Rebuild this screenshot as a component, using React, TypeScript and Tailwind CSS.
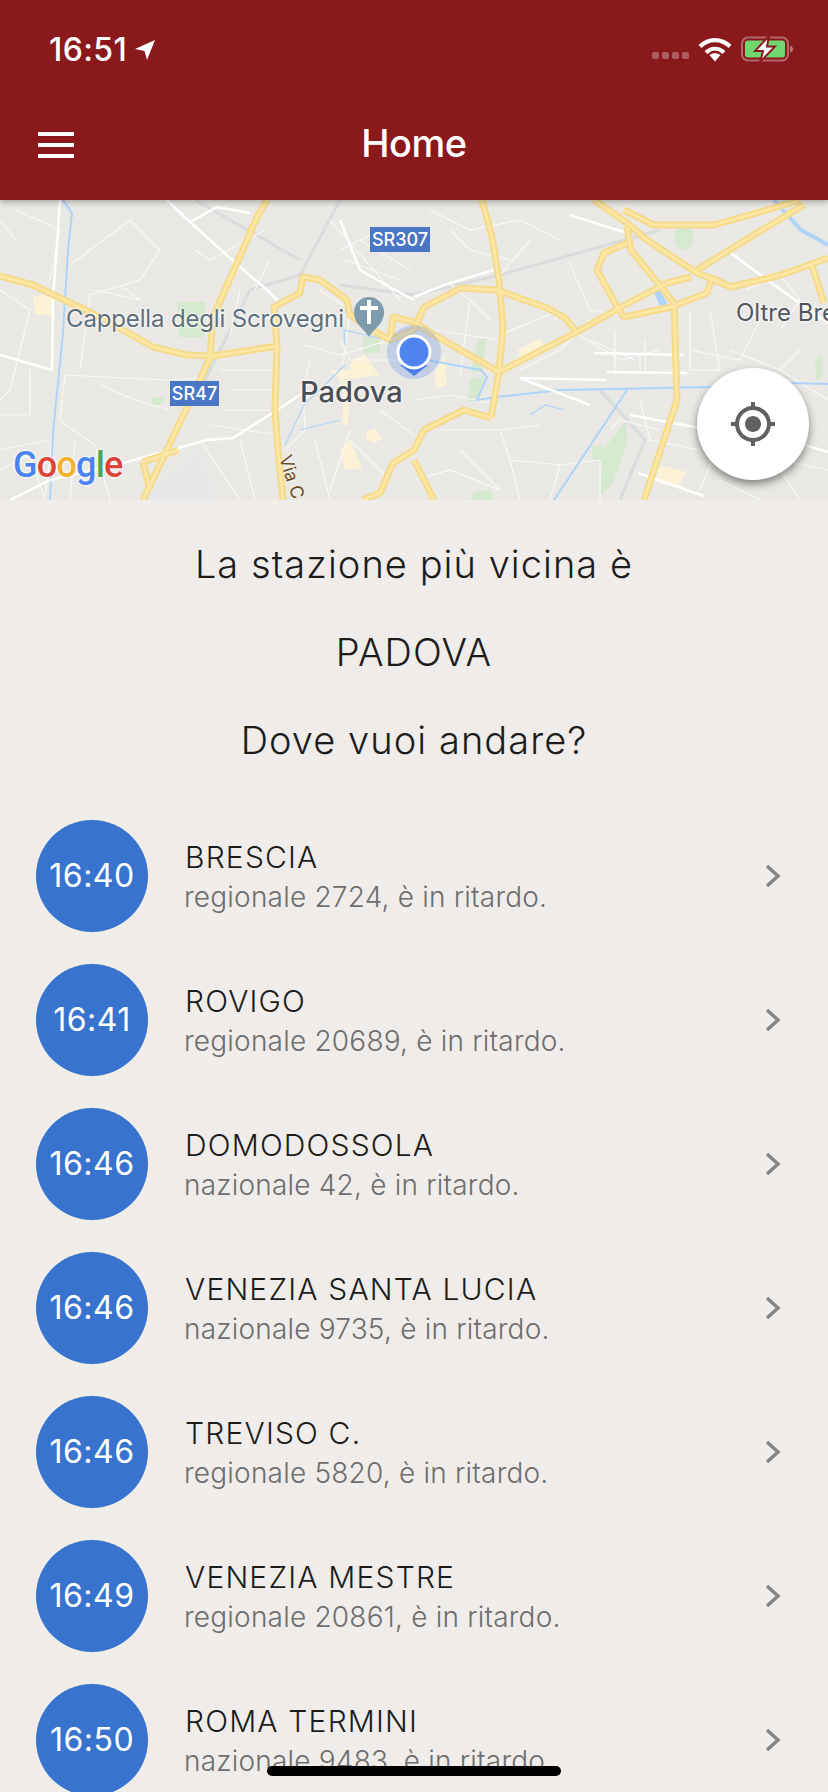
import { MdGpsFixed } from "react-icons/md";

const departures = [
  { time: "16:40", name: "BRESCIA", info: "regionale 2724, è in ritardo." },
  { time: "16:41", name: "ROVIGO", info: "regionale 20689, è in ritardo." },
  { time: "16:46", name: "DOMODOSSOLA", info: "nazionale 42, è in ritardo." },
  { time: "16:46", name: "VENEZIA SANTA LUCIA", info: "nazionale 9735, è in ritardo." },
  { time: "16:46", name: "TREVISO C.", info: "regionale 5820, è in ritardo." },
  { time: "16:49", name: "VENEZIA MESTRE", info: "regionale 20861, è in ritardo." },
  { time: "16:50", name: "ROMA TERMINI", info: "nazionale 9483, è in ritardo." },
];

const highways = [
  "M0 76L33 85L60 98L100 117L153 147L187 155L213 156L277 146",
  "M267 0L257 17L237 63L213 117L210 157L200 180L143 300",
  "M277 146L274 107L300 93L303 77L320 80L347 100L350 115L377 133L390 140L393 117L414 122",
  "M277 146L275 210L278 250L283 300",
  "M390 140L414 130L424 107L461 88L497 90L547 108L564 117L577 132",
  "M414 122L431 133L499 172L577 132L621 107L667 83L691 77",
  "M482 0L492 37L499 80L503 127L499 172L491 218",
  "M491 218L464 210L424 230L414 250L393 263L380 293L363 300",
  "M414 260L434 300",
  "M594 0L627 23L647 40L697 73L731 87L781 75L828 58",
  "M624 10L654 25L714 25L767 10L800 0",
  "M627 27L631 50L674 103L677 200L644 300",
  "M627 43L604 53L597 70L617 107L624 117L671 107L707 93L712 78L731 87",
  "M697 70L757 33L804 5",
  "M811 63L824 103",
  "M143 262L150 290",
  "M143 262L178 250",
];

const mainRoads = [
  "M167 0L190 22L240 67L267 90L277 100",
  "M190 22L217 7L250 13",
  "M60 0L53 100L52 170L0 155",
  "M10 300L50 280L123 263L207 240L233 238L277 210L300 195",
  "M594 153L684 155",
  "M607 172L687 173",
  "M520 178L606 180",
  "M570 15L627 33",
  "M414 97L444 85L494 70",
  "M638 273L704 296",
  "M630 215L700 228",
  "M340 20L360 70L395 90L414 100",
  "M805 245L828 252",
  "M731 53L767 80L828 123",
  "M520 178L590 205",
];

const minorRoads = [
  "M16 10L60 30L50 80M0 20L16 40M0 90L30 110L10 190L0 200",
  "M70 65L130 20L160 50L140 80L90 95L80 170M95 90L140 100L120 85",
  "M195 50L210 60L265 30M270 60L255 90M240 90L230 135",
  "M30 170L30 215L0 215M65 175L165 180L200 178M100 185L135 200L170 210",
  "M55 220L45 295M62 222L95 245L110 300M75 240L70 300M65 175L60 220",
  "M220 170L280 170M230 190L270 190M225 210L270 210L275 210",
  "M210 225L280 235M240 240L255 300M200 240L240 300M320 90L350 110L340 190L320 200",
  "M340 140L350 160L400 160M305 145L340 155L390 140M310 160L303 190L305 230L285 250",
  "M315 240L330 300M350 230L330 290M350 240L390 280M380 210L414 235",
  "M330 20L400 100M360 40L410 70M340 50L380 30M395 30L414 50M345 60L400 80",
  "M430 10L470 30L520 20L560 40M450 30L470 50L510 60M530 40L500 75",
  "M451 85L470 100L490 120M470 100L460 175M435 130L500 140M500 135L560 110L555 120",
  "M570 65L590 110L620 115M520 170L560 150L590 120M570 130L620 160L660 150",
  "M590 140L635 160M645 140L645 170M615 130L615 175M640 155L640 172",
  "M690 110L690 170M690 170L720 170L710 110M760 120L740 160L690 150",
  "M730 150L780 170L800 150M780 170L828 200M745 90L780 75L800 100L780 130",
  "M414 200L450 195L500 205M440 230L500 230L510 260L560 265L600 260M500 230L540 225",
  "M460 250L500 290M510 260L520 300M560 265L550 300M600 260L600 300",
  "M640 200L650 240L700 250M660 230L620 220L610 230M720 240L700 290M760 240L800 300",
  "M720 280L760 300M780 260L828 270M414 280L450 270L500 290",
  "M0 250L50 240M0 270L30 255L45 300",
];

function RoadMap() {
  return (
    <svg viewBox="0 0 828 300" className="block h-full w-full blur-[0.5px]">
      <rect width="828" height="300" fill="#e9e8e4" />

      {/* parks and built up areas */}
      <g fill="#d5e9ce">
        <path d="M178 102H205V137H178Z" />
        <path d="M152 198L165 197L162 204L152 206Z" />
        <path d="M363 137H380V153H363Z" />
        <ellipse cx="684" cy="38" rx="9" ry="12" />
        <path d="M478 140L487 138L482 172L471 172Z" />
        <path d="M470 180L485 175L478 200L468 202Z" />
        <path d="M592 245L605 248L625 222L628 240L612 285L600 296L602 265L592 258Z" />
        <path d="M815 160L823 155L822 178L816 180Z" />
        <path d="M475 292L490 290L494 300H470Z" />
      </g>
      <g fill="#fcf3d7">
        <path d="M33 96L52 94L55 116L35 114Z" />
        <path d="M330 170L350 170L352 160L365 155L375 170L380 175L340 180Z" />
        <path d="M343 180H350L348 225H343Z" />
        <path d="M340 250L350 240L362 268L345 270Z" />
        <path d="M366 232L375 228L382 238L375 243L367 240Z" />
        <path d="M518 150L540 138L543 145L520 158Z" />
        <path d="M660 265L686 272L678 288L655 282Z" />
        <path d="M435 172L445 155L447 185L436 188Z" />
      </g>
      <path d="M150 290L200 250L215 300H145Z" fill="#e6e7e9" />

      {/* railway */}
      <g fill="none" stroke="#d9dcdd" strokeWidth="3">
        <path d="M195 0L300 60" />
        <path d="M200 190L250 90L300 75L340 0" />
        <path d="M340 85L414 95L500 75L660 30" />
        <path d="M600 190L645 240L620 300" />
      </g>

      <g fill="none" stroke="#f8f8f6" strokeWidth="1.2">
        {minorRoads.map((d) => (
          <path key={d} d={d} />
        ))}
      </g>

      {/* water */}
      <g fill="none" stroke="#aed4fa" strokeWidth="2">
        <path d="M63 0L72 13L68 50L63 133L53 233L50 300" />
        <path d="M427 160L481 170L487 177L477 200L497 197L561 190L711 187" />
        <path d="M791 183L828 184" />
        <path d="M627 190L554 300" />
        <path d="M774 0L801 30L828 45" strokeWidth="4" />
        <path d="M345 145L344 130L410 145M345 165L304 205L285 245M300 230L340 220" strokeWidth="1.2" />
        <path d="M530 215L545 205L565 210" strokeWidth="1.2" />
      </g>
      <path d="M654 92L660 90L668 105L660 106Z" fill="#aed4fa" />

      <g fill="none" stroke="#ffffff" strokeWidth="2.5" strokeLinejoin="round">
        {mainRoads.map((d) => (
          <path key={d} d={d} />
        ))}
      </g>
      <g fill="none" strokeLinejoin="round">
        {highways.map((d) => (
          <path key={d} d={d} stroke="#f5da8b" strokeWidth="7" />
        ))}
        {highways.map((d) => (
          <path key={d + "-in"} d={d} stroke="#fbe6a4" strokeWidth="3" />
        ))}
      </g>

      {/* place marker */}
      <path d="M369 137C366 130 354 125 354 112A15 15 0 0 1 384 112C384 125 372 130 369 137Z" fill="#7f9bae" />
      <path d="M367 100H371V106H378V110H371V124H367V110H360V106H367Z" fill="#ffffff" />

      {/* current position */}
      <circle cx="414" cy="152" r="27" fill="#4f80e6" fillOpacity="0.25" />
      <path d="M400 165H428L414 176Z" fill="#4a7de8" />
      <circle cx="414" cy="152" r="16" fill="#4f83ee" stroke="#ffffff" strokeWidth="3" />
    </svg>
  );
}

function StatusIcons() {
  return (
    <div className="mt-[2px] flex items-center">
      <div className="mt-[12px] mr-[9px] flex gap-[3px]">
        <span className="h-[7px] w-[7px] rounded-[2px] bg-white/30" />
        <span className="h-[7px] w-[7px] rounded-[2px] bg-white/30" />
        <span className="h-[7px] w-[7px] rounded-[2px] bg-white/30" />
        <span className="h-[7px] w-[7px] rounded-[2px] bg-white/30" />
      </div>
      <svg width="34" height="25" viewBox="0 0 34 25" fill="none" stroke="#ffffff" strokeWidth="4.2">
        <path d="M2 9.5C10.500 1 23.500 1 32 9.500" />
        <path d="M8 15.500C13.500 10.500 20.500 10.500 26 15.500" />
        <path d="M11.500 18L17 24.500L22.500 18C19 15.500 15 15.500 11.500 18Z" fill="#ffffff" stroke="none" />
      </svg>
      <svg width="53" height="26" viewBox="0 0 53 26" className="ml-[9px]">
        <rect x="1" y="1.500" width="46" height="23" rx="6" fill="none" stroke="#ffffff" strokeOpacity="0.35" strokeWidth="2" />
        <rect x="4" y="4.500" width="40" height="17" rx="3" fill="#70d66f" />
        <path d="M49 9.500C51 10 52 11.500 52 13C52 14.500 51 16 49 16.500Z" fill="#ffffff" fillOpacity="0.4" />
        <path d="M28 0L14 15H22L19 26L34 10.500H26Z" fill="#ffffff" stroke="#8a191c" strokeWidth="2" />
      </svg>
    </div>
  );
}

function Header() {
  return (
    <header className="relative z-10 h-[200px] bg-[#8a191c] text-white shadow-[0_2px_6px_rgba(0,0,0,0.3)]">
      <div className="flex h-[98px] items-start justify-between pt-[34px] pr-[34px] pl-[49px]">
        <div className="flex items-center gap-[7px]">
          <span className="text-[32px] leading-[32px] font-medium tracking-[0.4px]">16:51</span>
          <svg width="22" height="22" viewBox="0 0 22 22">
            <path d="M21 1L13 21L10.500 12L1 10Z" fill="#ffffff" />
          </svg>
        </div>
        <StatusIcons />
      </div>
      <div className="relative flex h-[102px] items-center justify-center pb-[12px]">
        <div className="absolute top-[34px] left-[38px] flex w-[36px] flex-col gap-[7px]">
          <span className="h-[4px] bg-white" />
          <span className="h-[4px] bg-white" />
          <span className="h-[4px] bg-white" />
        </div>
        <h1 className="text-[38px] leading-none font-medium tracking-[-0.5px]">Home</h1>
      </div>
    </header>
  );
}

function MapPanel() {
  return (
    <section className="relative h-[300px] overflow-hidden">
      <RoadMap />
      <span className="absolute top-[104px] left-[66px] text-[24px] leading-[30px] tracking-[-0.15px] text-[#5d6f7e] [text-shadow:0_0_3px_#fff,0_0_3px_#fff]">
        Cappella degli Scrovegni
      </span>
      <span className="absolute top-[174px] left-[300px] text-[29px] leading-[36px] font-medium text-[#4a4e55] [text-shadow:0_0_3px_#fff,0_0_3px_#fff]">
        Padova
      </span>
      <span className="absolute top-[98px] left-[736px] text-[24px] leading-[30px] whitespace-nowrap text-[#52565e] [text-shadow:0_0_3px_#fff,0_0_3px_#fff]">
        Oltre Bre
      </span>
      <span className="absolute top-[266px] left-[269px] rotate-[72deg] text-[18px] leading-[22px] text-[#6b4a22] [text-shadow:0_0_3px_#fff]">
        Via C
      </span>
      <span className="absolute top-[27px] left-[370px] flex h-[25px] w-[60px] items-center justify-center bg-[#4a76c6] text-[18px] font-medium text-white">
        SR307
      </span>
      <span className="absolute top-[181px] left-[170px] flex h-[25px] w-[49px] items-center justify-center bg-[#4a76c6] text-[18px] font-medium text-white">
        SR47
      </span>
      <span className="absolute top-[245px] left-[13px] font-['Roboto',sans-serif] text-[36px] leading-[40px] font-medium tracking-[-0.8px] [text-shadow:0_0_3px_#fff,0_0_3px_#fff]">
        <span className="text-[#4c84ee]">G</span>
        <span className="text-[#dc4437]">o</span>
        <span className="text-[#f2b128]">o</span>
        <span className="text-[#4c84ee]">g</span>
        <span className="text-[#4aa757]">l</span>
        <span className="text-[#dc4437]">e</span>
      </span>
      <button className="absolute top-[168px] left-[697px] flex h-[112px] w-[112px] items-center justify-center rounded-full bg-white text-[#616161] shadow-[0_4px_8px_rgba(0,0,0,0.45)]">
        <MdGpsFixed size={48} />
      </button>
    </section>
  );
}

function DepartureRow({ time, name, info }: { time: string; name: string; info: string }) {
  return (
    <li className="flex h-[144px] items-center pr-[47px] pl-[36px]">
      <div className="flex h-[112px] w-[112px] shrink-0 items-center justify-center rounded-full bg-[#3873cd] text-[32px] tracking-[0.5px] text-white">
        {time}
      </div>
      <div className="ml-[37px] flex-1 pt-[2px]">
        <div className="text-[30px] leading-[40px] font-[350] tracking-[1.18px] text-[#1c1c1c]">{name}</div>
        <div className="-ml-[1px] text-[28px] leading-[40px] font-[350] tracking-[0.21px] text-[#6e6e6e]">{info}</div>
      </div>
      <svg width="16" height="24" viewBox="0 0 16 24" fill="none" stroke="#858585" strokeWidth="3.500">
        <path d="M2 2L13 12L2 22" />
      </svg>
    </li>
  );
}

export default function App() {
  return (
    <div className="relative h-[1792px] w-[828px] overflow-hidden bg-[#efecea] font-['Inter',sans-serif]">
      <Header />
      <MapPanel />
      <div className="pt-[20px] text-center text-[38px] leading-[88px] font-[350] tracking-[1.05px] text-[#1c1c1c]">
        <p>La stazione più vicina è</p>
        <p>PADOVA</p>
        <p>Dove vuoi andare?</p>
      </div>
      <ul className="mt-[20px]">
        {departures.map((d) => (
          <DepartureRow key={d.name} time={d.time} name={d.name} info={d.info} />
        ))}
      </ul>
      <div className="absolute top-[1766px] left-[267px] h-[10px] w-[294px] rounded-full bg-black" />
    </div>
  );
}
